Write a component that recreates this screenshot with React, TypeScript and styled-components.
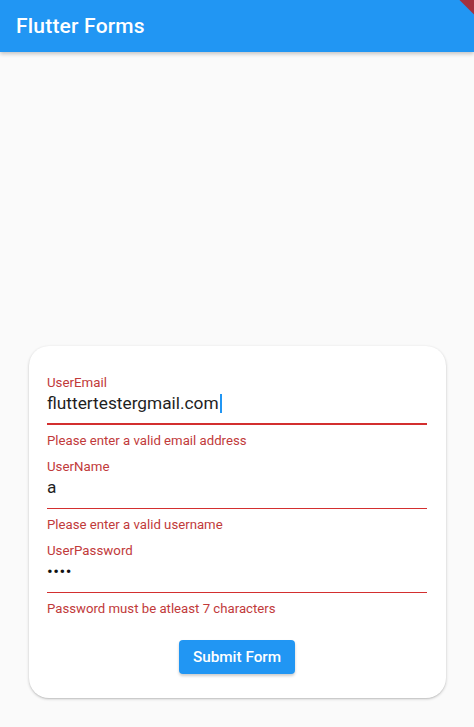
import React from 'react';
import styled, { createGlobalStyle } from 'styled-components';

const GlobalStyle = createGlobalStyle`
  html, body {
    margin: 0;
    padding: 0;
    background: #fafafa;
    font-family: Roboto, "Noto Sans", sans-serif;
  }
`;

const colors = {
  primary: '#2196f3',
  error: '#c13a3a',
  errorLine: '#d32f2f',
  text: '#1f1f1f',
};

const Page = styled.div`
  position: relative;
  display: flex;
  flex-direction: column;
  height: 727px;
  overflow: hidden;
`;

const AppBar = styled.header`
  display: flex;
  align-items: center;
  height: 52px;
  padding: 0 16px;
  flex-shrink: 0;
  background: ${colors.primary};
  box-shadow: 0 2px 4px rgba(0, 0, 0, 0.22);
  z-index: 1;
`;

const Title = styled.h1`
  margin: 0 0 1px 0;
  color: #fff;
  font-size: 21px;
  font-weight: 500;
  letter-spacing: 0.2px;
`;

const DebugBanner = styled.div`
  position: absolute;
  top: -3px;
  right: -42px;
  width: 90px;
  height: 12px;
  background: #a3313f;
  transform: rotate(45deg);
  transform-origin: center;
  z-index: 2;
`;

const Body = styled.main`
  flex: 1;
  display: flex;
  align-items: flex-end;
  padding: 0 28px 29px 29px;
`;

const Card = styled.form`
  flex: 1;
  display: flex;
  flex-direction: column;
  padding: 29px 19px 24px 18px;
  background: #fff;
  border-radius: 20px;
  box-shadow: 0 1px 3px rgba(0, 0, 0, 0.22), 0 1px 1px rgba(0, 0, 0, 0.06);
`;

const Field = styled.div`
  display: flex;
  flex-direction: column;
  height: 84px;
`;

const Label = styled.span`
  color: ${colors.error};
  font-size: 13.3px;
  line-height: 16px;
`;

const InputRow = styled.div<{ $focused?: boolean }>`
  display: flex;
  align-items: center;
  height: 24px;
  padding-bottom: ${(p) => (p.$focused ? 8 : 9)}px;
  border-bottom: ${(p) => (p.$focused ? 2 : 1)}px solid ${colors.errorLine};
  color: ${colors.text};
  font-size: 17.3px;
`;

const Dots = styled.span`
  font-size: 17px;
  letter-spacing: 0.5px;
  color: #111;
`;

const Caret = styled.span`
  display: inline-block;
  width: 2px;
  height: 19px;
  margin-left: 1px;
  background: ${colors.primary};
`;

const ErrorText = styled.span`
  margin-top: 8px;
  color: ${colors.error};
  font-size: 13.2px;
  line-height: 16px;
`;

const Actions = styled.div`
  display: flex;
  justify-content: center;
  margin-top: 13px;
`;

const SubmitButton = styled.button`
  height: 34px;
  padding: 0 14px;
  border: none;
  border-radius: 4px;
  background: ${colors.primary};
  color: #fff;
  font-family: inherit;
  font-size: 15.3px;
  font-weight: 500;
  box-shadow: 0 2px 3px rgba(0, 0, 0, 0.2);
`;

type FieldProps = {
  label: string;
  error: string;
  focused?: boolean;
  children: React.ReactNode;
};

function FormField({ label, error, focused, children }: FieldProps) {
  return (
    <Field>
      <Label>{label}</Label>
      <InputRow $focused={focused}>{children}</InputRow>
      <ErrorText>{error}</ErrorText>
    </Field>
  );
}

export default function App() {
  return (
    <Page>
      <GlobalStyle />
      <AppBar>
        <Title>Flutter Forms</Title>
      </AppBar>
      <DebugBanner />
      <Body>
        <Card onSubmit={(e) => e.preventDefault()}>
          <FormField label="UserEmail" error="Please enter a valid email address" focused>
            fluttertestergmail.com
            <Caret />
          </FormField>
          <FormField label="UserName" error="Please enter a valid username">
            a
          </FormField>
          <FormField label="UserPassword" error="Password must be atleast 7 characters">
            <Dots>••••</Dots>
          </FormField>
          <Actions>
            <SubmitButton type="submit">Submit Form</SubmitButton>
          </Actions>
        </Card>
      </Body>
    </Page>
  );
}
